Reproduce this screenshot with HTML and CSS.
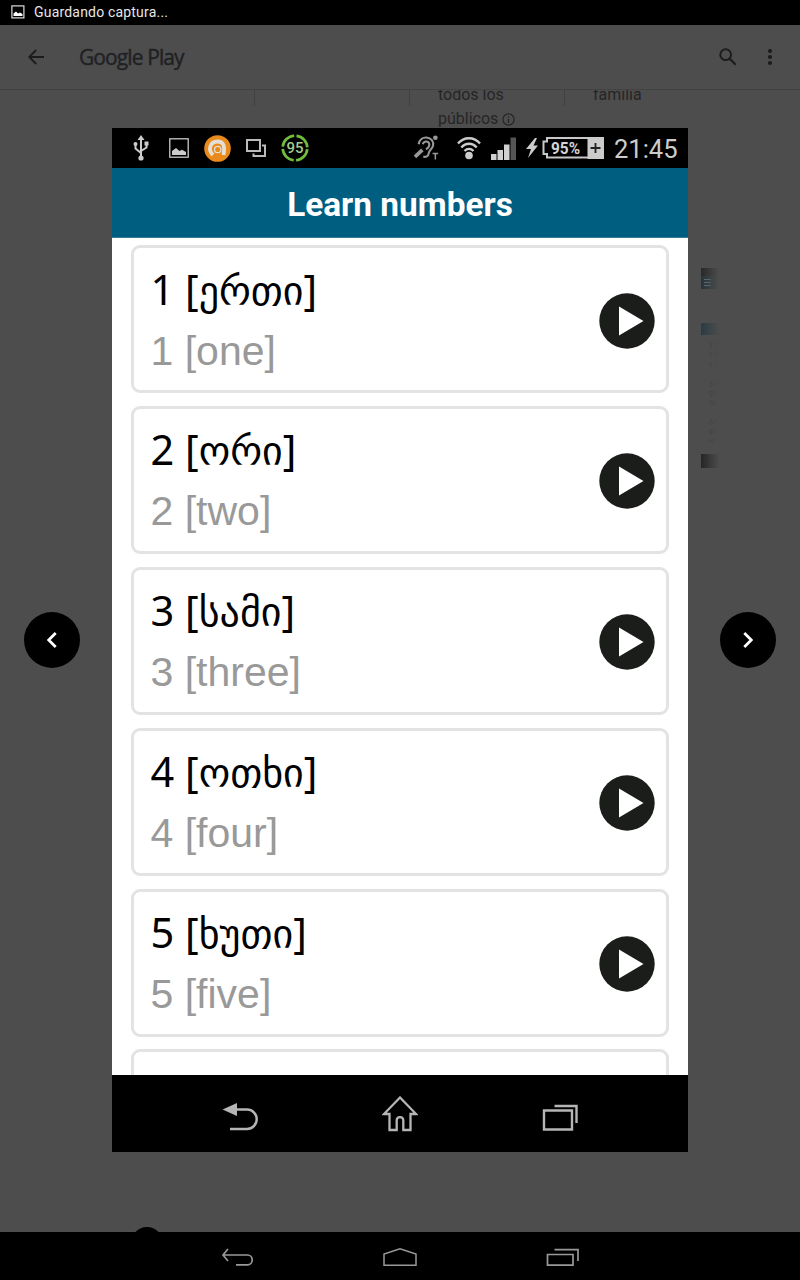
FILE: index.html
```
<!DOCTYPE html>
<html lang="es">
<head>
<meta charset="utf-8">
<title>Google Play</title>
<link rel="stylesheet" href="styles.css">
</head>
<body>
<svg width="0" height="0" class="defs"><symbol id="play" viewBox="0 0 56 56"><circle cx="28" cy="28" r="27.700" fill="#1b1d1a"/><path d="M20 13.500v29L44.500 28z" fill="#fff"/></symbol></svg>
<div class="screen">
  <div class="statusbar">
    <svg width="14" height="14" viewBox="0 0 14 14"><rect x=".9" y=".9" width="12" height="12" fill="none" stroke="#ddd" stroke-width="1.2"/><path d="M2.500 11V8.500L5 6.500l2 2 2-1 2.500 1.500v2z" fill="#fff"/></svg>
    <span>Guardando captura...</span>
  </div>
  <header class="topbar">
    <svg class="back" width="16" height="16" viewBox="0 0 16 16"><path d="M16 8H1.500M8.200 1L1.200 8l7 7" fill="none" stroke="#1c1c1c" stroke-width="1.800"/></svg>
    <span class="brand">Google Play</span>
    <svg width="18" height="18" viewBox="0 0 18 18"><circle cx="6.700" cy="6.700" r="5.400" fill="none" stroke="#1c1c1c" stroke-width="2"/><path d="M10.700 10.700l6 6" stroke="#1c1c1c" stroke-width="2.200"/></svg>
    <svg class="dots" width="6" height="18" viewBox="0 0 6 18" fill="#1c1c1c"><circle cx="3" cy="3" r="2.100"/><circle cx="3" cy="9" r="2.100"/><circle cx="3" cy="15" r="2.100"/></svg>
  </header>
  <main class="page">
    <div class="facts">
      <div class="fact"></div>
      <div class="fact"></div>
      <div class="fact"><p>todos los<br>públicos <svg width="13" height="13" viewBox="0 0 13 13"><circle cx="6.500" cy="6.500" r="5.600" fill="none" stroke="#252525" stroke-width="1.200"/><path d="M6.500 5.700v4M6.500 3.200v1.400" stroke="#252525" stroke-width="1.300"/></svg></p></div>
      <div class="fact"><p>familia</p></div>
    </div>
    <div class="thumb">
      <div class="thumb-status"></div>
      <div class="thumb-head"><i></i><i></i><i></i></div>
      <div class="thumb-title"></div>
      <div class="thumb-text">3 [t<br>3 [t<br>3 [t</div>
      <div class="thumb-text">გო<br>go<br>Go</div>
      <div class="thumb-text">გო<br>go<br>H</div>
      <div class="thumb-nav"></div>
    </div>
    <div class="fab"></div>
  </main>
  <nav class="sysnav">
    <svg width="34" height="20" viewBox="0 0 34 20"><path d="M7 1L2 7l5 6M2 7h24.500a4.700 4.900 0 0 1 0 9.800H15" fill="none" stroke="#999" stroke-width="1.700"/></svg>
    <svg width="34" height="20" viewBox="0 0 34 20"><path d="M1 17.200V6L17 .9 33 6v11.200z" fill="none" stroke="#999" stroke-width="1.500"/></svg>
    <svg width="34" height="20" viewBox="0 0 34 20"><path d="M2.500 6.500H28v10.700H2.500zM9.500 1.700H33V13" fill="none" stroke="#999" stroke-width="1.700"/></svg>
  </nav>

  <div class="lightbox">
    <button class="arrow"><svg width="10" height="16" viewBox="0 0 10 16"><path d="M8.700 1L1.700 8l7 7" fill="none" stroke="#fff" stroke-width="2.800"/></svg></button>
    <section class="phone">
      <div class="phone-status">
        <div class="icons-left">
          <svg width="16" height="26" viewBox="0 0 16 26" fill="none" stroke="#ccc" stroke-width="2"><path d="M8 4v18M2.500 9v4.500L8 18M13.500 8v4.500L8 16"/><path d="M8 0l3.500 5h-7z" fill="#ccc" stroke="none"/><circle cx="8" cy="23" r="2.600" fill="#ccc" stroke="none"/><circle cx="2.500" cy="9" r="2" fill="#ccc" stroke="none"/><path d="M11.500 6.500h4v4h-4z" fill="#ccc" stroke="none"/></svg>
          <svg width="20" height="20" viewBox="0 0 20 20"><rect x=".8" y=".8" width="18.400" height="18.400" fill="none" stroke="#c8c8c8" stroke-width="1.300"/><path d="M3 17v-4l4-3 3.500 3 2.500-1.300 4 2.300v3z" fill="#ccc"/></svg>
          <svg width="27" height="27" viewBox="0 0 27 27"><circle cx="13.500" cy="13.500" r="13.300" fill="#e88a1c"/><path d="M9 20C3.500 15 6 6.500 13.500 6.500c6.500 0 7.500 5 6 13.500" fill="none" stroke="#e5dfd5" stroke-width="3.800"/><circle cx="13.700" cy="14.500" r="3.200" fill="none" stroke="#e5dfd5" stroke-width="1.300"/></svg>
          <svg width="20" height="18" viewBox="0 0 20 18"><path d="M1 1h13v11H1z" fill="none" stroke="#bbb" stroke-width="2"/><path d="M16 6.500h3V17H7.500v-2.500" fill="none" stroke="#bbb" stroke-width="2"/></svg>
          <svg width="28" height="28" viewBox="0 0 28 28"><circle cx="14" cy="14" r="12.300" fill="none" stroke="#6fbf3d" stroke-width="2.700" stroke-dasharray="16.920 2.400" stroke-dashoffset="-1.200"/><text x="14" y="19" text-anchor="middle" class="gauge">95</text></svg>
        </div>
        <div class="icons-right">
          <svg width="26" height="26" viewBox="0 0 28 27" fill="none" stroke="#999" stroke-width="2.200"><path d="M5 9.500C6 4 10 2 13.500 2.200c5 .3 8 4.500 7 9-1 4-4 4-4.500 7.500-.5 4-3.500 5-6 4"/><path d="M9.500 9.500c1-4 6.500-4 7 0 .3 2.500-1.500 4-3.500 5.500"/><path d="M1 23l8-7.500" stroke-width="4"/><circle cx="23" cy="2.500" r="2.500" fill="#999" stroke="none"/><path d="M20 19.500h6M23 19v7" stroke-width="1.600"/></svg>
          <svg width="24" height="24" viewBox="0 0 24 24" fill="none" stroke="#ccc" stroke-width="2.300"><path d="M1 7.500c6-7 16-7 22 0M4.300 11.500c4.500-5 11-5 15.400 0M7.500 15c2.600-2.800 6.400-2.800 9 0"/><circle cx="12" cy="19.500" r="3.800" fill="#ccc" stroke="none"/></svg>
          <svg width="25" height="23" viewBox="0 0 25 23" fill="#d0d0d0"><path d="M0 17h5.500v6H0zM6.500 13H12v10H6.500zM13 7.500h5.500V23H13z"/><path d="M19.500.5H25V23h-5.500z" fill="#555"/></svg>
          <svg width="78" height="24" viewBox="0 0 78 24"><path d="M9 2L0 13h5L2 22 12 9.500H7.500L11 2z" fill="#ccc"/><path d="M62 2H21v3.500h-3.500V18H21v3.500h41" fill="none" stroke="#c8c8c8" stroke-width="2"/><path d="M61.500 1H78v22H61.500z" fill="#ccc"/><path d="M64.500 12h10M69.500 7v10" stroke="#222" stroke-width="1.800"/><text x="25" y="18" class="battery" textLength="29" lengthAdjust="spacingAndGlyphs">95%</text></svg>
          <span class="clock">21:45</span>
        </div>
      </div>
      <h1 class="phone-title">Learn numbers</h1>
      <div class="list">
        <article class="card"><div><p class="geo">1 [<span class="ka">ერთი</span>]</p><p class="eng">1 [one]</p></div><svg class="play"><use href="#play"/></svg></article>
        <article class="card"><div><p class="geo">2 [<span class="ka">ორი</span>]</p><p class="eng">2 [two]</p></div><svg class="play"><use href="#play"/></svg></article>
        <article class="card"><div><p class="geo">3 [<span class="ka">სამი</span>]</p><p class="eng">3 [three]</p></div><svg class="play"><use href="#play"/></svg></article>
        <article class="card"><div><p class="geo">4 [<span class="ka">ოთხი</span>]</p><p class="eng">4 [four]</p></div><svg class="play"><use href="#play"/></svg></article>
        <article class="card"><div><p class="geo">5 [<span class="ka">ხუთი</span>]</p><p class="eng">5 [five]</p></div><svg class="play"><use href="#play"/></svg></article>
        <article class="card"></article>
      </div>
      <div class="phone-nav">
        <svg width="36" height="36" viewBox="0 0 36 36"><path d="M.5 13.500L15 7v13z" fill="#b5b5b5"/><path d="M14 13.500h11a9.700 9.700 0 0 1 0 19.400H8" fill="none" stroke="#b5b5b5" stroke-width="2.500"/></svg>
        <svg width="36" height="36" viewBox="0 0 36 36"><path d="M18 1.500L2 18h5.500v16h7.200V24.500c0-4.500 6.600-4.500 6.600 0V34h7.200V18H34z" fill="none" stroke="#b5b5b5" stroke-width="2.300"/></svg>
        <svg width="36" height="36" viewBox="0 0 36 36"><path d="M2 14.500h28V33.500H2zM12.500 10H34.500V27" fill="none" stroke="#b5b5b5" stroke-width="2.400"/></svg>
      </div>
    </section>
    <button class="arrow"><svg width="10" height="16" viewBox="0 0 10 16"><path d="M1.300 1l7 7-7 7" fill="none" stroke="#fff" stroke-width="2.800"/></svg></button>
  </div>
</div>
</body>
</html>
```
FILE: styles.css
```
* { box-sizing: border-box; }
body { margin: 0; background: #000; font-family: Roboto, "Liberation Sans", sans-serif; }
svg { display: block; flex: none; }
.screen { position: relative; width: 800px; height: 1280px; display: flex; flex-direction: column; overflow: hidden; background: #4d4d4d; }
.statusbar { height: 25px; flex: none; background: #000; color: #e6e6e6; display: flex; align-items: center; gap: 9px; padding: 0 0 1px 11px; font-size: 14px; letter-spacing: .19px; }
.topbar { height: 65px; flex: none; display: flex; align-items: center; padding: 0 27px 0 28px; border-bottom: 1px solid #424242; }
.brand { margin-left: 35px; margin-right: auto; font-family: "Open Sans", sans-serif; font-size: 21px; letter-spacing: -.9px; color: #202124; -webkit-text-stroke: .4px #202124; }
.dots { margin-left: 30px; }
.page { flex: 1; min-height: 0; overflow: hidden; display: flex; flex-direction: column; }
.facts { display: grid; flex: none; grid-template-columns: 255px 155px 155px 155px; height: 38px; overflow: hidden; color: #252525; font-size: 16px; line-height: 24px; }
.fact { height: 16px; border-right: 1px solid #404040; padding-left: 28px; white-space: nowrap; }
.fact p { margin: -7px 0 0; }
.fact:last-child { border: 0; }
.fact svg { display: inline-block; vertical-align: -2px; }
.thumb { flex: none; margin: 140px 0 0 701px; width: 18px; height: 200px; overflow: hidden; display: flex; flex-direction: column; -webkit-mask-image: linear-gradient(90deg, #000, transparent); }
.thumb-status { height: 8px; flex: none; background: #292929; }
.thumb-head { height: 13px; flex: none; background: #26343b; padding: 3px 8px 0 3px; }
.thumb-head i { display: block; height: 1px; margin-bottom: 2px; background: #61727a; }
.thumb-title { margin: 34px 0 5px; height: 12px; flex: none; background: #2b3c45; }
.thumb-text { padding-left: 8px; font-size: 7px; line-height: 10px; color: #363636; white-space: nowrap; margin-bottom: 8px; }
.thumb-nav { margin-top: auto; height: 15px; flex: none; background: #262626; }
.fab { width: 32px; height: 32px; flex: none; border-radius: 50%; background: #000; margin: 759px 0 0 131px; }
.sysnav { height: 48px; flex: none; background: #000; display: flex; justify-content: center; gap: 128px; padding-top: 16px; }
.defs { display: none; }
.lightbox { position: absolute; inset: 0; display: flex; align-items: center; justify-content: space-between; padding: 0 24px; }
.arrow { width: 56px; height: 56px; border: 0; border-radius: 50%; background: #000; padding: 0; display: flex; align-items: center; justify-content: center; }
.phone { width: 576px; height: 1024px; display: flex; flex-direction: column; background: #fff; }
.phone-status { height: 40px; flex: none; background: #000; display: flex; justify-content: space-between; padding: 0 9px 0 21px; }
.icons-left, .icons-right { display: flex; align-items: center; }
.icons-left svg { margin-right: 15px; }
.icons-left svg:first-child { margin-right: 20px; }
.icons-right svg { margin-right: 10px; }
.icons-right svg:first-child { margin-right: 17px; }
.gauge { font: 500 15px Roboto, sans-serif; fill: #a5cc8d; }
.battery { font: 700 17px Roboto, sans-serif; fill: #d4d4d4; }
.clock { font-size: 25.5px; color: #ccc; width: 65px; white-space: nowrap; padding-top: 2px; }
.phone-title { margin: 0; height: 70px; flex: none; background: #005e80; border-bottom: 1px solid #3b7b93; color: #fff; font-size: 33.4px; font-weight: 700; line-height: 73px; text-align: center; }
.list { height: 837px; flex: none; overflow: hidden; padding: 7px 19px 0; display: flex; flex-direction: column; gap: 12.9px; }
.card { height: 148px; flex: none; border: 3px solid #e4e2e3; border-radius: 9px; display: flex; align-items: center; justify-content: space-between; padding: 3px 11px 0 16.5px; }
.card p { margin: 0; height: 62px; line-height: 61px; white-space: nowrap; }
.card .geo { line-height: 60px; font-family: "Noto Sans", "DejaVu Sans", sans-serif; font-size: 41.500px; color: #000; }
.ka { font-family: "DejaVu Sans", sans-serif; font-size: 40px; }
.eng { font-family: "Liberation Sans", sans-serif; font-size: 41px; color: #999; }
.play { width: 56px; height: 56px; }
.phone-nav { flex: 1; background: #000; display: flex; justify-content: center; gap: 124px; padding-top: 21px; }
```
